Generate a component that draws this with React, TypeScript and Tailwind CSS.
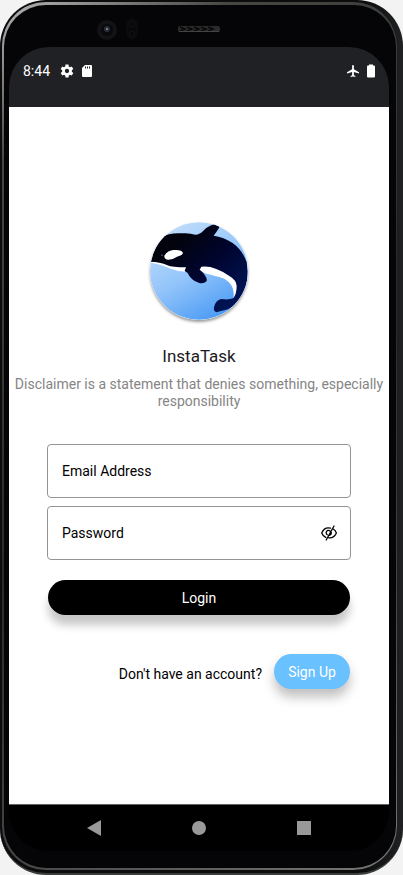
import { useState } from "react";

function StatusBar() {
  return (
    <header className="flex h-15 items-start justify-between bg-[#202125] px-3.5 pt-4 text-white">
      <div className="flex h-4 items-center">
        <span className="w-9 text-sm">8:44</span>
        <svg viewBox="0 0 24 24" className="ml-px h-4 w-3.5 fill-white" aria-hidden="true">
          <path fillRule="evenodd" d="M9.5 1h5l.6 3.2 2 1.2L20.2 4.2l2.6 4.4-2.5 2.2v2.4l2.500 2.200-2.600 4.400-3.100-1.200-2 1.200-.6 3.200h-5l-.6-3.200-2-1.200-3.100 1.200-2.600-4.400 2.500-2.200v-2.400L1.200 8.600l2.600-4.400 3.100 1.200 2-1.200zM12 8.300a3.700 3.700 0 1 0 0 7.400 3.700 3.700 0 0 0 0-7.400z" />
        </svg>
        <svg viewBox="0 0 10 12" className="ml-2 h-3 w-2.5 fill-white" aria-hidden="true">
          <path fillRule="evenodd" d="M3 0h6a1 1 0 0 1 1 1v10a1 1 0 0 1-1 1H1a1 1 0 0 1-1-1V3zM3 1.500v2h1v-2zm2 0v2h1v-2zm2 0v2h1v-2z" />
        </svg>
      </div>
      <div className="flex h-4 items-center gap-2">
        <svg viewBox="2 2 20 20" className="h-3.5 w-3 fill-white" aria-hidden="true">
          <path d="M22 16v-2l-8.500-5V3.500a1.500 1.500 0 0 0-3 0V9L2 14v2l8.500-2.500V19L8 20.500V22l4-1 4 1v-1.500L13.500 19v-5.500z" />
        </svg>
        <svg viewBox="0 0 8 13" className="h-3.5 w-2 fill-white" aria-hidden="true">
          <path d="M2 0h4v1h1a1 1 0 0 1 1 1v10a1 1 0 0 1-1 1H1a1 1 0 0 1-1-1V2a1 1 0 0 1 1-1h1z" />
        </svg>
      </div>
    </header>
  );
}

function OrcaLogo() {
  return (
    <svg viewBox="30 36 294 292" className="h-[98px] w-[98px] rounded-full shadow-[0_2px_3px_rgba(0,0,0,0.4)]" role="img" aria-label="InstaTask logo">
      <defs>
        <linearGradient id="sky" x1="0.2" y1="0" x2="0.75" y2="1">
          <stop offset="0" stopColor="#c5dffb" />
          <stop offset="0.5" stopColor="#93c5fa" />
          <stop offset="1" stopColor="#4295f4" />
        </linearGradient>
        <linearGradient id="orca" x1="0" y1="0" x2="1" y2="1">
          <stop offset="0.25" stopColor="#02030d" />
          <stop offset="0.55" stopColor="#000530" />
          <stop offset="1" stopColor="#001963" />
        </linearGradient>
        <clipPath id="disc">
          <ellipse cx="177" cy="182" rx="147" ry="146" />
        </clipPath>
      </defs>
      <g clipPath="url(#disc)">
        <rect x="25" y="30" width="305" height="305" fill="url(#sky)" />
        <path fill="#fff" d="M32 153 L138 168 L182 166 Q226 164 259 186 Q289 202 292 231 Q292 250 281 265 Q284 231 266 215 Q254 203 238 200 Q212 192 199 190 Q188 186 181 180 L138 184 Q112 183 92 175 Q64 161 32 157z" />
        <path fill="url(#orca)" d="M30 154 Q40 111 63 82 Q89 66 126 69 Q148 67 166 73 Q180 72 190 61 Q208 42 242 39 Q239 54 221 76 Q251 80 278 98 Q308 120 320 156 Q328 215 309 253 Q287 284 264 297 L229 306 Q220 304 222 291 Q226 270 244 266 Q266 270 281 263 Q290 248 290 227 Q289 209 268 197 Q221 164 184 169 L179 178 Q203 198 200 212 Q191 222 176 217 Q153 211 143 188 L134 182 L138 171 Q96 171 82 165 Q61 154 30 154z" />
        <path fill="#fff" d="M73 136 Q83 120 101 119 Q126 117 129 128 Q127 136 111 139 Q97 149 83 148 Q72 145 73 136z" />
        <circle cx="66" cy="135" r="3" fill="#39455c" />
      </g>
    </svg>
  );
}

function EyeOff() {
  return (
    <svg viewBox="0 0 16 16" className="h-4 w-4" fill="none" stroke="black" strokeWidth="1.3" strokeLinecap="round" aria-hidden="true">
      <path d="M9.500 3.200C5.500 2.200 2.300 4.300.7 8c.8 2 2.200 3.600 4 4.400M12.500 4.300c1.300.8 2.200 2 2.900 3.700-1.600 3.500-4.300 5.200-7.700 4.800M9 6a2.300 2.300 0 1 0-2.700 3.700M10.300 7.500c.2 1.500-.7 2.600-2 2.800M13 1 5.200 15" />
    </svg>
  );
}

const field =
  "block h-[54px] w-full rounded-[4px] border border-[#949494] bg-white px-3.5 text-sm text-black outline-none placeholder:text-black placeholder:opacity-100";

export default function App() {
  const [visible, setVisible] = useState(false);
  return (
    <div className="flex min-h-screen bg-[#f3f3f3] font-['Roboto',sans-serif]">
      <div className="flex flex-1 rounded-[46px] border-b-2 border-[#3b3d3c] bg-linear-to-r from-[#0c0c0d] from-90% to-[#1f2122] pt-0.5 pr-[6px] pb-[3px] pl-0.5">
        <div className="flex flex-1 rounded-[44px] bg-[linear-gradient(145deg,#b5b5b5_0%,#8f8f8f_5%,#454743_14%,#292b2b_50%,#444_75%,#777a77_100%)] pt-[3px] pr-px pb-0.5 pl-0.5">
          <div className="flex flex-1 flex-col rounded-[42px] bg-[#050507] pr-[7px] pl-[5px]">
            <div className="h-[42px]" aria-hidden="true">
              <svg viewBox="0 0 380 42" className="h-full w-full">
                <circle cx="98" cy="25" r="10" fill="#131315" />
                <circle cx="98" cy="25" r="6" fill="#08090d" />
                <circle cx="98" cy="24" r="3" fill="#2b2e3b" />
                <circle cx="98" cy="24" r="1" fill="#8a8fa0" />
                <rect x="118" y="14" width="10" height="20" rx="5" fill="#08080a" stroke="#0e0e10" />
                <circle cx="123" cy="19" r="3" fill="none" stroke="#131315" />
                <circle cx="123" cy="29" r="3" fill="none" stroke="#131315" />
                <rect x="169" y="21" width="42" height="6" rx="2" fill="#2b2b2c" />
                <path d="m171 22 5 2-5 2m7-4 5 2-5 2m7-4 5 2-5 2m7-4 5 2-5 2m7-4 5 2-5 2" fill="none" stroke="#080808" strokeWidth="1.500" />
                <path d="M170 26.500h40" stroke="#444" />
              </svg>
            </div>
            <div className="flex flex-1 flex-col overflow-hidden rounded-[40px] bg-black">
              <StatusBar />
              <main className="flex flex-1 flex-col items-center bg-white pt-[115px]">
                <OrcaLogo />
                <h1 className="mt-6 text-[17px] leading-6 text-[#1b1b1f]">InstaTask</h1>
                <p className="mt-2 text-center text-sm leading-[17px] text-[#858585]">
                  Disclaimer is a statement that denies something, especially responsibility
                </p>
                <form className="mt-[34px] flex w-full flex-col px-[38px]" onSubmit={(e) => e.preventDefault()}>
                  <input className={field} type="email" aria-label="Email Address" placeholder="Email Address" />
                  <div className="relative mt-2">
                    <input className={field} type={visible ? "text" : "password"} aria-label="Password" placeholder="Password" />
                    <button type="button" aria-label="Toggle password visibility" className="absolute inset-y-0 right-3.5 flex items-center" onClick={() => setVisible(!visible)}>
                      <EyeOff />
                    </button>
                  </div>
                  <div className="flex flex-col px-px">
                    <button type="submit" className="mt-5 h-[35px] rounded-full bg-black text-sm text-white shadow-[0_10px_8px_rgba(0,0,0,0.22)]">
                      Login
                    </button>
                    <div className="mt-[39px] flex items-center justify-end gap-3">
                      <span className="pt-1 text-sm text-black">Don't have an account?</span>
                      <button type="button" className="h-[35px] w-[76px] rounded-full bg-[#6ac1ff] text-sm text-white shadow-[0_8px_12px_rgba(0,0,0,0.25)]">
                        Sign Up
                      </button>
                    </div>
                  </div>
                </form>
              </main>
              <nav className="flex h-[47px] items-center justify-around border-t border-[#5f6462] bg-black px-8" aria-label="System">
                <button type="button" aria-label="Back">
                  <svg viewBox="0 0 14 16" className="h-4 w-3.5 fill-[#999]"><path d="M14 0v16L0 8z" /></svg>
                </button>
                <button type="button" aria-label="Home" className="h-3.5 w-3.5 rounded-full bg-[#999]" />
                <button type="button" aria-label="Recents" className="h-3.5 w-3.5 bg-[#999]" />
              </nav>
            </div>
            <div className="h-[17px]" />
          </div>
        </div>
      </div>
    </div>
  );
}
